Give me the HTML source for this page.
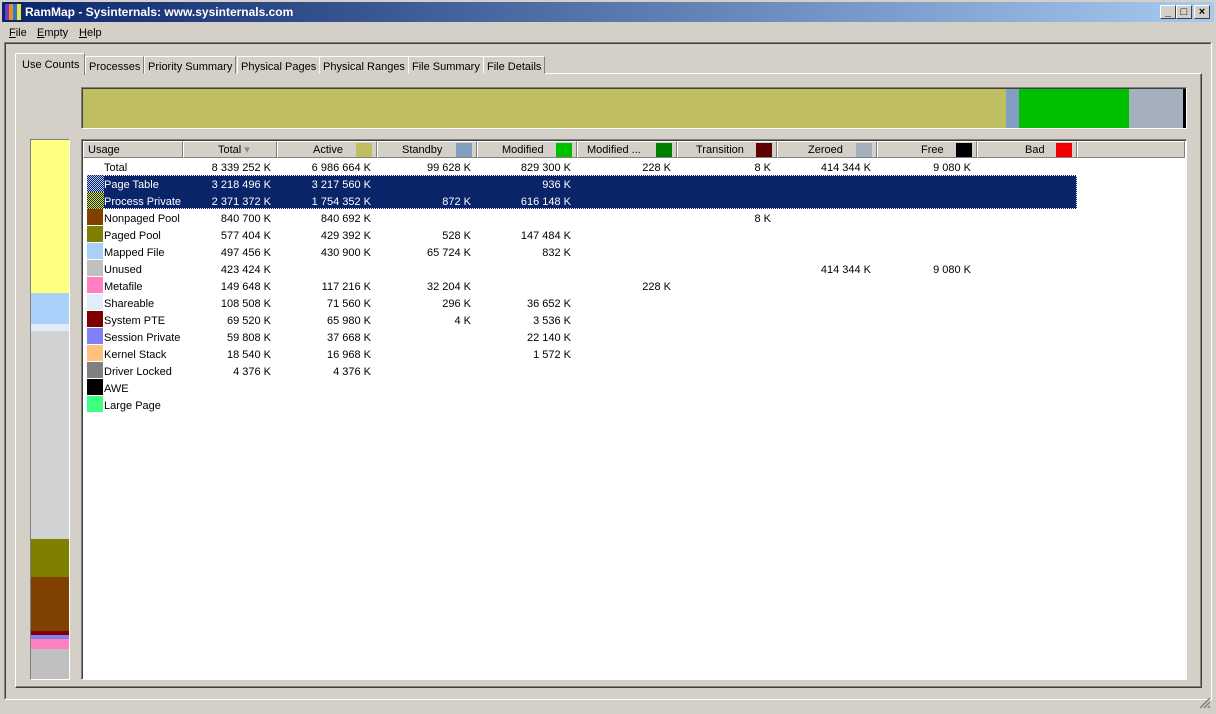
<!DOCTYPE html>
<html><head><meta charset="utf-8"><style>
*{margin:0;padding:0;box-sizing:border-box}
body{width:1216px;height:714px;background:#d4d0c8;font-family:"Liberation Sans",Tahoma,sans-serif;font-size:11px;color:#000;position:relative;overflow:hidden}
.a{position:absolute}
.title{left:0;top:0;width:1216px;height:22px;background:linear-gradient(90deg,#0a246a,#a6caf0);border:2px solid #d4d0c8;border-bottom:none}
.title span{position:absolute;left:23px;top:3px;color:#fff;font-weight:bold;font-size:12px}
.btn{top:5px;width:16px;height:14px;background:#d4d0c8;border:1px solid;border-color:#fff #404040 #404040 #fff;font-size:11px;font-weight:bold;text-align:center;line-height:12px}
.menu span{position:absolute;top:27px}
.tab{top:56px;height:18px;border:1px solid;border-color:#fff #808080 transparent #fff;padding:4px 3px 0 3px;white-space:nowrap;background:#d4d0c8}
.hd{top:141px;height:17px;background:#d4d0c8;border:1px solid;border-color:#fff #808080 #808080 #fff;line-height:15px;padding-top:1px}
.sw{width:16px;height:14px;top:1px}
.r{position:absolute;height:17px;line-height:17px;white-space:nowrap;margin-top:2px}
.v{position:absolute;text-align:right;width:90px}
</style></head><body>
<div class="a title"><span>RamMap - Sysinternals: www.sysinternals.com</span></div>
<div class="a" style="left:5px;top:4px;width:16px;height:16px;background:linear-gradient(90deg,#6a3cc8 0 25%,#f08c1a 25% 50%,#2a7ad8 50% 75%,#f0e040 75%)"></div>
<div class="a btn" style="left:1160px">_</div>
<div class="a btn" style="left:1176px">□</div>
<div class="a btn" style="left:1194px">×</div>
<div class="menu"><span style="left:9px"><u>F</u>ile</span><span style="left:37px"><u>E</u>mpty</span><span style="left:79px"><u>H</u>elp</span></div>
<div class="a" style="left:4px;top:42px;width:1208px;height:658px;border:1px solid;border-color:#808080 #fff #fff #808080"></div>
<div class="a" style="left:5px;top:43px;width:1206px;height:656px;border:1px solid;border-color:#404040 #d4d0c8 #d4d0c8 #404040"></div>
<div class="a" style="left:15px;top:73px;width:1187px;height:615px;border:1px solid;border-color:#fff #404040 #404040 #fff;box-shadow:inset -1px -1px 0 #808080"></div>
<div class="a tab" style="left:85px">Processes</div>
<div class="a tab" style="left:144px">Priority Summary</div>
<div class="a tab" style="left:237px">Physical Pages</div>
<div class="a tab" style="left:319px">Physical Ranges</div>
<div class="a tab" style="left:408px">File Summary</div>
<div class="a tab" style="left:483px">File Details</div>
<div class="a tab" style="left:15px;top:53px;height:22px;width:70px;padding:5px 0 0 6px;border-bottom:none;z-index:2">Use Counts</div>
<div class="a" style="left:81px;top:87px;width:1106px;height:42px;border:1px solid;border-color:#808080 #fff #fff #808080"></div>
<div class="a" style="left:82px;top:88px;width:1104px;height:40px;border:1px solid #404040;border-right:none;border-bottom:none;background:linear-gradient(90deg,#bfbe60 0 923px,#829ec0 923px 936px,#00bf00 936px 1046px,#a4b0bc 1046px 1100px,#000 1100px)"></div>
<div class="a" style="left:30px;top:139px;width:40px;height:541px;border:1px solid;border-color:#808080 #fff #fff #808080;background:linear-gradient(180deg,#ffff80 0 153px,#a8d0f8 153px 184px,#e0eefc 184px 191px,#d2d2d2 191px 399px,#808000 399px 437px,#804000 437px 491px,#800000 491px 495px,#8080f0 495px 499px,#ff80c0 499px 509px,#c0c0c0 509px)"></div>
<div class="a" style="left:81px;top:139px;width:1106px;height:541px;border:1px solid;border-color:#808080 #fff #fff #808080;background:#fff;box-shadow:inset 1px 1px 0 #404040"></div>
<div class="a hd" style="left:83px;width:100px;padding-left:4px">Usage</div>
<div class="a hd" style="left:183px;width:94px;padding-left:34px">Total <span style="color:#888">▾</span></div>
<div class="a hd" style="left:277px;width:100px;padding-left:35px">Active<div class="a sw" style="left:78px;background:#bfbe60"></div></div>
<div class="a hd" style="left:377px;width:100px;padding-left:24px">Standby<div class="a sw" style="left:78px;background:#829ec0"></div></div>
<div class="a hd" style="left:477px;width:100px;padding-left:24px">Modified<div class="a sw" style="left:78px;background:#00bf00"></div></div>
<div class="a hd" style="left:577px;width:100px;padding-left:9px">Modified ...<div class="a sw" style="left:78px;background:#008000"></div></div>
<div class="a hd" style="left:677px;width:100px;padding-left:18px">Transition<div class="a sw" style="left:78px;background:#600000"></div></div>
<div class="a hd" style="left:777px;width:100px;padding-left:30px">Zeroed<div class="a sw" style="left:78px;background:#a4b0bc"></div></div>
<div class="a hd" style="left:877px;width:100px;padding-left:43px">Free<div class="a sw" style="left:78px;background:#000"></div></div>
<div class="a hd" style="left:977px;width:100px;padding-left:47px">Bad<div class="a sw" style="left:78px;background:#f00000"></div></div>
<div class="a hd" style="left:1077px;width:108px"></div>
<div class="a" style="left:104px;top:175px;width:973px;height:34px;background:#0a246a;border:1px dotted #fff;border-left:none"></div>
<div class="a" style="left:87px;top:175px;width:17px;height:17px;background:repeating-conic-gradient(#0a246a 0 25%,#b8c8f0 0 50%) 0 0/2px 2px"></div>
<div class="a" style="left:87px;top:192px;width:17px;height:17px;background:repeating-conic-gradient(#1a3010 0 25%,#d8e060 0 50%) 0 0/2px 2px"></div>
<div class="r" style="top:158px;left:104px">Total</div>
<div class="v r" style="top:158px;left:181px">8 339 252 K</div><div class="v r" style="top:158px;left:281px">6 986 664 K</div><div class="v r" style="top:158px;left:381px">99 628 K</div><div class="v r" style="top:158px;left:481px">829 300 K</div><div class="v r" style="top:158px;left:581px">228 K</div><div class="v r" style="top:158px;left:681px">8 K</div><div class="v r" style="top:158px;left:781px">414 344 K</div><div class="v r" style="top:158px;left:881px">9 080 K</div>
<div style="color:#fff">
<div class="r" style="top:175px;left:104px">Page Table</div><div class="v r" style="top:175px;left:181px">3 218 496 K</div><div class="v r" style="top:175px;left:281px">3 217 560 K</div><div class="v r" style="top:175px;left:481px">936 K</div>
<div class="r" style="top:192px;left:104px">Process Private</div><div class="v r" style="top:192px;left:181px">2 371 372 K</div><div class="v r" style="top:192px;left:281px">1 754 352 K</div><div class="v r" style="top:192px;left:381px">872 K</div><div class="v r" style="top:192px;left:481px">616 148 K</div>
</div>
<div class="a" style="left:87px;top:209px;width:16px;height:16px;background:#804000"></div><div class="r" style="top:209px;left:104px">Nonpaged Pool</div><div class="v r" style="top:209px;left:181px">840 700 K</div><div class="v r" style="top:209px;left:281px">840 692 K</div><div class="v r" style="top:209px;left:681px">8 K</div>
<div class="a" style="left:87px;top:226px;width:16px;height:16px;background:#808000"></div><div class="r" style="top:226px;left:104px">Paged Pool</div><div class="v r" style="top:226px;left:181px">577 404 K</div><div class="v r" style="top:226px;left:281px">429 392 K</div><div class="v r" style="top:226px;left:381px">528 K</div><div class="v r" style="top:226px;left:481px">147 484 K</div>
<div class="a" style="left:87px;top:243px;width:16px;height:16px;background:#a8d0f8"></div><div class="r" style="top:243px;left:104px">Mapped File</div><div class="v r" style="top:243px;left:181px">497 456 K</div><div class="v r" style="top:243px;left:281px">430 900 K</div><div class="v r" style="top:243px;left:381px">65 724 K</div><div class="v r" style="top:243px;left:481px">832 K</div>
<div class="a" style="left:87px;top:260px;width:16px;height:16px;background:#c0c0c0"></div><div class="r" style="top:260px;left:104px">Unused</div><div class="v r" style="top:260px;left:181px">423 424 K</div><div class="v r" style="top:260px;left:781px">414 344 K</div><div class="v r" style="top:260px;left:881px">9 080 K</div>
<div class="a" style="left:87px;top:277px;width:16px;height:16px;background:#ff80c0"></div><div class="r" style="top:277px;left:104px">Metafile</div><div class="v r" style="top:277px;left:181px">149 648 K</div><div class="v r" style="top:277px;left:281px">117 216 K</div><div class="v r" style="top:277px;left:381px">32 204 K</div><div class="v r" style="top:277px;left:581px">228 K</div>
<div class="a" style="left:87px;top:294px;width:16px;height:16px;background:#e0eefc"></div><div class="r" style="top:294px;left:104px">Shareable</div><div class="v r" style="top:294px;left:181px">108 508 K</div><div class="v r" style="top:294px;left:281px">71 560 K</div><div class="v r" style="top:294px;left:381px">296 K</div><div class="v r" style="top:294px;left:481px">36 652 K</div>
<div class="a" style="left:87px;top:311px;width:16px;height:16px;background:#800000"></div><div class="r" style="top:311px;left:104px">System PTE</div><div class="v r" style="top:311px;left:181px">69 520 K</div><div class="v r" style="top:311px;left:281px">65 980 K</div><div class="v r" style="top:311px;left:381px">4 K</div><div class="v r" style="top:311px;left:481px">3 536 K</div>
<div class="a" style="left:87px;top:328px;width:16px;height:16px;background:#8080f8"></div><div class="r" style="top:328px;left:104px">Session Private</div><div class="v r" style="top:328px;left:181px">59 808 K</div><div class="v r" style="top:328px;left:281px">37 668 K</div><div class="v r" style="top:328px;left:481px">22 140 K</div>
<div class="a" style="left:87px;top:345px;width:16px;height:16px;background:#ffc080"></div><div class="r" style="top:345px;left:104px">Kernel Stack</div><div class="v r" style="top:345px;left:181px">18 540 K</div><div class="v r" style="top:345px;left:281px">16 968 K</div><div class="v r" style="top:345px;left:481px">1 572 K</div>
<div class="a" style="left:87px;top:362px;width:16px;height:16px;background:#808080"></div><div class="r" style="top:362px;left:104px">Driver Locked</div><div class="v r" style="top:362px;left:181px">4 376 K</div><div class="v r" style="top:362px;left:281px">4 376 K</div>
<div class="a" style="left:87px;top:379px;width:16px;height:16px;background:#000"></div><div class="r" style="top:379px;left:104px">AWE</div>
<div class="a" style="left:87px;top:396px;width:16px;height:16px;background:#40ff80"></div><div class="r" style="top:396px;left:104px">Large Page</div>
<svg class="a" style="left:1199px;top:697px" width="12" height="12"><path d="M11 1L1 11M11 5L5 11M11 9L9 11" stroke="#808080" stroke-width="1.5"/></svg>
</body></html>
